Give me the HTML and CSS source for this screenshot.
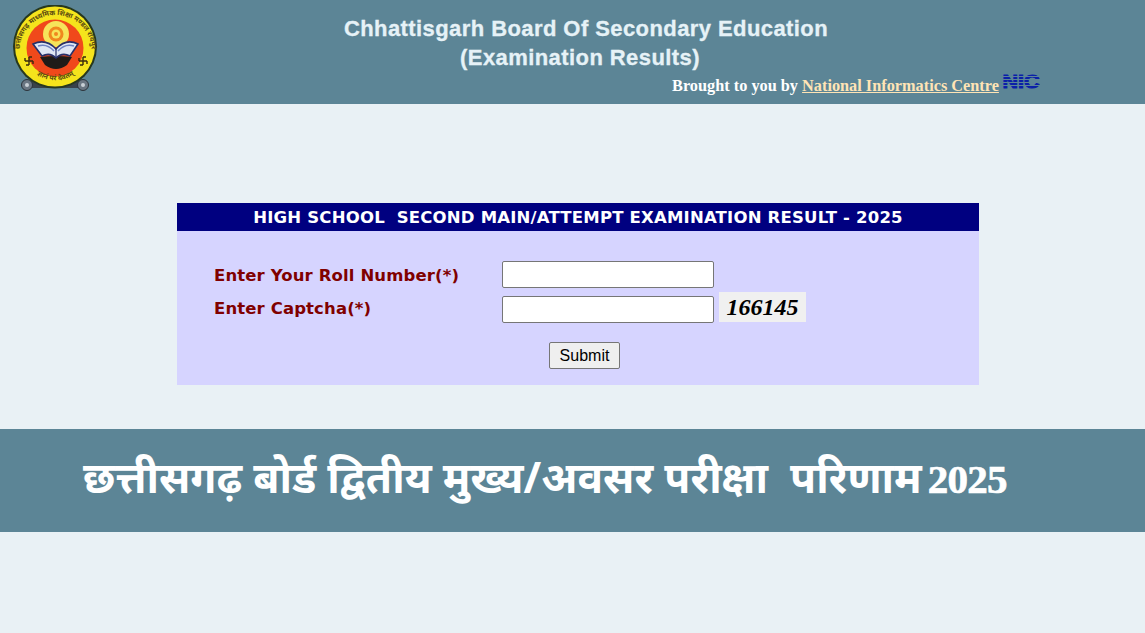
FILE: index.html
```html
<!DOCTYPE html>
<html lang="en">
<head>
    <meta charset="UTF-8">
    <title>Examination Results</title>
    <link rel="stylesheet" href="styles.css">
</head>
<body>

    <div class="header">
        <svg class="logo" viewBox="0 0 88 88" width="88" height="88">
            <defs>
                <path id="ring-top" d="M8 52 A36 36 0 1 1 79 52"/>
                <path id="ring-bottom" d="M17 62 A33 33 0 0 0 70 62"/>
            </defs>
            <!-- wheels under the seal -->
            <rect x="18" y="76" width="52" height="7" fill="#39424a"/>
            <circle cx="15" cy="80" r="5.5" fill="#6a7682" stroke="#2b333b"/>
            <circle cx="15" cy="80" r="2" fill="#c9d0d6"/>
            <circle cx="71" cy="80" r="5.5" fill="#6a7682" stroke="#2b333b"/>
            <circle cx="71" cy="80" r="2" fill="#c9d0d6"/>
            <!-- seal -->
            <circle cx="43" cy="41.5" r="42" fill="#27381e"/>
            <circle cx="43" cy="41.5" r="40" fill="#f5e41c"/>
            <circle cx="43" cy="43" r="28.5" fill="#f0491b"/>
            <circle cx="44" cy="29" r="13" fill="#f6e45a"/>
            <circle cx="44" cy="29" r="7.5" fill="#f0881e"/>
            <circle cx="44" cy="29" r="4.5" fill="#f6e45a"/>
            <circle cx="44" cy="29" r="2" fill="#f0881e"/>
            <!-- lamp and open book -->
            <path d="M28 52 Q44 50 60 52 L55 60 Q44 68 33 60 Z" fill="#1f1b18"/>
            <path d="M21 39 Q34 33 44 44 Q54 33 66 39 L58 51 Q50 47 44 53 Q38 47 30 51 Z" fill="#dfe6f4" stroke="#27306a" stroke-width="1.6"/>
            <path d="M44 44 V53" stroke="#27306a" stroke-width="1.2"/>
            <path d="M26 41 Q35 38 42 46 M62 41 Q53 38 46 46" fill="none" stroke="#6f83c4" stroke-width="1.5"/>
            <!-- swastika marks -->
            <path d="M13 56 h8 M17 52 v8 M17 52 h3 M21 56 v3 M17 60 h-3 M13 56 v-3" fill="none" stroke="#3a2c0c" stroke-width="1.4"/>
            <path d="M67 56 h8 M71 52 v8 M71 52 h3 M75 56 v3 M71 60 h-3 M67 56 v-3" fill="none" stroke="#3a2c0c" stroke-width="1.4"/>
            <text class="logo-text"><textPath href="#ring-top" startOffset="50%" text-anchor="middle">छत्तीसगढ़ माध्यमिक शिक्षा मण्डल रायपुर</textPath></text>
            <text class="logo-text"><textPath href="#ring-bottom" startOffset="50%" text-anchor="middle">ज्ञानं परं देवतम्</textPath></text>
        </svg>
        <div class="head-text">
            <div class="head-title">Chhattisgarh Board Of Secondary Education</div>
            <div class="head-title second">(Examination Results)</div>
            <div class="brought">
                Brought to you by <a href="#">National Informatics Centre</a>
                <svg class="nic" viewBox="0 0 38 22" width="38" height="22">
                    <text class="nic-text" x="0.5" y="17.5" textLength="37" lengthAdjust="spacingAndGlyphs">NIC</text>
                    <path d="M0 6.5h38 M0 9.5h38 M0 12.5h38 M0 15.5h38" stroke="#5c8596" stroke-width="1"/>
                </svg>
            </div>
        </div>
    </div>

    <div class="panel">
        <div class="panel-title">HIGH SCHOOL &nbsp;SECOND MAIN/ATTEMPT EXAMINATION RESULT - 2025</div>
        <form class="result-form">
            <label class="form-label">Enter Your Roll Number(*)</label>
            <input class="form-input" type="text">
            <span></span>
            <label class="form-label">Enter Captcha(*)</label>
            <input class="form-input second-input" type="text">
            <span class="captcha">166145</span>
            <div class="submit-row">
                <button class="submit-btn" type="button">Submit</button>
            </div>
        </form>
    </div>

    <div class="banner">
        <h1>छत्तीसगढ़ बोर्ड द्वितीय मुख्य/अवसर परीक्षा &nbsp;परिणाम <span class="year">2025</span></h1>
    </div>

</body>
</html>
```

FILE: styles.css
```css
* {
    margin: 0;
    padding: 0;
    box-sizing: border-box;
}

body {
    background-color: #e9f1f5;
    font-family: 'DejaVu Sans', sans-serif;
    min-height: 633px;
}

.header {
    height: 104px;
    background-color: #5c8596;
    display: flex;
    padding: 5px 0 0 12px;
}

.logo {
    flex: none;
}

.logo-text {
    font-family: 'Noto Sans', sans-serif;
    font-size: 7px;
    font-weight: bold;
    fill: #5a4a10;
}

.head-text {
    width: 940px;
    padding-top: 9px;
    margin-left: 16px;
}

.head-title {
    color: #e6f2f7;
    font-family: 'Liberation Sans', Arial, sans-serif;
    font-size: 22px;
    font-weight: bold;
    letter-spacing: 0.42px;
    line-height: 29px;
    text-align: center;
    -webkit-text-stroke: 0.3px #e6f2f7;
}

.second {
    padding-right: 12px;
}

.brought {
    color: #fff;
    font-family: 'Liberation Serif', serif;
    font-size: 16.3px;
    font-weight: bold;
    text-align: right;
    line-height: 20px;
    padding: 4px 16px 0 0;
}

.brought a {
    color: #ffe4b5;
}

.nic {
    vertical-align: -0.5px;
    margin: -9px 0 0 -1px;
}

.nic-text {
    font-family: 'Liberation Sans', Arial, sans-serif;
    font-size: 19px;
    font-weight: bold;
    fill: #0a1fa8;
    stroke: #0a1fa8;
    stroke-width: 1;
}

.panel {
    width: 802px;
    margin: 99px 0 0 177px;
    background-color: #d6d4ff;
}

.panel-title {
    height: 28px;
    padding-top: 1px;
    background-color: #000080;
    color: #fff;
    font-size: 16.5px;
    font-weight: bold;
    letter-spacing: 0.2px;
    line-height: 27px;
    text-align: center;
}

.result-form {
    display: grid;
    grid-template-columns: 288px 212px 1fr;
    grid-template-rows: 27px 31px auto;
    row-gap: 4px;
    align-items: center;
    padding: 30px 0 16px 37px;
}

.form-label {
    padding-top: 1px;
    color: #800000;
    font-size: 16.5px;
    font-weight: bold;
    letter-spacing: 0.12px;
}

.form-input {
    height: 27px;
    width: 212px;
    border: 1px solid #767676;
    border-radius: 2px;
    background: #fff;
}

.second-input {
    align-self: end;
}

.captcha {
    align-self: start;
    width: 87px;
    height: 30px;
    margin-left: 5px;
    background-color: #f0f0f0;
    color: #000;
    font-family: 'Liberation Serif', serif;
    font-size: 24px;
    font-style: italic;
    font-weight: bold;
    line-height: 30px;
    text-align: center;
}

.submit-row {
    grid-column: 1 / 4;
    padding: 15px 0 0 335px;
}

.submit-btn {
    width: 71px;
    height: 27px;
    border: 1px solid #767676;
    border-radius: 2px;
    background-color: #efefef;
    color: #000;
    font-family: 'Liberation Sans', Arial, sans-serif;
    font-size: 16px;
}

.banner {
    height: 103px;
    margin-top: 44px;
    background-color: #5c8596;
    padding: 18px 0 0 83px;
}

.banner h1 {
    color: #fff;
    font-family: 'Noto Sans', 'DejaVu Sans', sans-serif;
    font-size: 42.5px;
    font-weight: bold;
    line-height: 60px;
    white-space: nowrap;
}

.year {
    margin-left: -5px;
    font-family: 'Liberation Serif', serif;
    font-size: 41px;
    letter-spacing: -0.8px;
    -webkit-text-stroke: 0.7px #fff;
}
```
